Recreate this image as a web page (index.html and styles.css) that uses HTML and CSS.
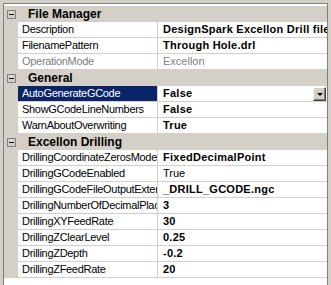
FILE: index.html
```html
<!DOCTYPE html>
<html lang="en">
<head>
    <meta charset="UTF-8">
    <title>Property Grid</title>
    <link rel="stylesheet" href="styles.css">
</head>
<body>

<div class="grid">
    <div class="cat"><span class="toggle"></span><span class="cat-label">File Manager</span></div>
    <div class="row"><div class="gutter"></div><div class="name">Description</div><div class="value bold">DesignSpark Excellon Drill file output</div></div>
    <div class="row"><div class="gutter"></div><div class="name">FilenamePattern</div><div class="value bold">Through Hole.drl</div></div>
    <div class="row readonly"><div class="gutter"></div><div class="name">OperationMode</div><div class="value">Excellon</div></div>

    <div class="cat"><span class="toggle"></span><span class="cat-label">General</span></div>
    <div class="row selected"><div class="gutter"></div><div class="name">AutoGenerateGCode</div><div class="value bold">False<span class="drop"><span class="arrow"></span></span></div></div>
    <div class="row"><div class="gutter"></div><div class="name">ShowGCodeLineNumbers</div><div class="value bold">False</div></div>
    <div class="row"><div class="gutter"></div><div class="name">WarnAboutOverwriting</div><div class="value bold">True</div></div>

    <div class="cat"><span class="toggle"></span><span class="cat-label">Excellon Drilling</span></div>
    <div class="row"><div class="gutter"></div><div class="name">DrillingCoordinateZerosMode</div><div class="value bold">FixedDecimalPoint</div></div>
    <div class="row"><div class="gutter"></div><div class="name">DrillingGCodeEnabled</div><div class="value">True</div></div>
    <div class="row"><div class="gutter"></div><div class="name">DrillingGCodeFileOutputExtension</div><div class="value bold">_DRILL_GCODE.ngc</div></div>
    <div class="row"><div class="gutter"></div><div class="name">DrillingNumberOfDecimalPlaces</div><div class="value bold">3</div></div>
    <div class="row"><div class="gutter"></div><div class="name">DrillingXYFeedRate</div><div class="value bold">30</div></div>
    <div class="row"><div class="gutter"></div><div class="name">DrillingZClearLevel</div><div class="value bold">0.25</div></div>
    <div class="row"><div class="gutter"></div><div class="name">DrillingZDepth</div><div class="value bold">-0.2</div></div>
    <div class="row"><div class="gutter"></div><div class="name">DrillingZFeedRate</div><div class="value bold">20</div></div>
</div>

</body>
</html>
```

FILE: styles.css
```css
body {
    margin: 0;
    padding: 3px 3px 0 3px;
    background-color: #d4d0c8;
    font-family: "Liberation Sans", Arial, sans-serif;
    font-size: 11px;
    color: #000;
}
.grid {
    height: 282px;
    box-sizing: border-box;
    background-color: #fff;
    border-top: 1px solid #808080;
    border-left: 1px solid #808080;
    border-right: 1px solid #808080;
    overflow: hidden;
    padding-top: 2px;
}
.cat {
    display: flex;
    align-items: center;
    height: 16px;
    background-color: #d4d0c8;
    font-weight: bold;
    font-size: 12px;
}
.toggle {
    position: relative;
    width: 7px;
    height: 7px;
    margin-left: 3px;
    border: 1px solid #808080;
}
.toggle::after {
    content: "";
    position: absolute;
    left: 1px;
    top: 3px;
    width: 5px;
    height: 1px;
    background-color: #000;
}
.cat-label {
    margin-left: 12px;
}
.row {
    display: flex;
    height: 16px;
}
.gutter {
    width: 14px;
    flex: none;
    background-color: #d4d0c8;
}
.name, .value {
    box-sizing: border-box;
    height: 16px;
    line-height: 15px;
    padding-left: 4px;
    border-bottom: 1px solid #d4d0c8;
    white-space: nowrap;
    overflow: hidden;
    text-overflow: clip;
    letter-spacing: -0.3px;
}
.name {
    width: 140px;
    flex: none;
    border-right: 1px solid #d4d0c8;
}
.value {
    flex: 1;
    position: relative;
    padding-left: 5px;
    letter-spacing: 0;
}
.bold {
    font-weight: bold;
    letter-spacing: 0.25px;
}
.readonly .name, .readonly .value {
    color: #808080;
}
.selected .name {
    background-color: #0a246a;
    color: #fff;
}
.drop {
    position: absolute;
    right: 1px;
    top: 1px;
    width: 13px;
    height: 14px;
    box-sizing: border-box;
    background-color: #d4d0c8;
    border-top: 1px solid #fff;
    border-left: 1px solid #fff;
    border-right: 1px solid #404040;
    border-bottom: 1px solid #404040;
    box-shadow: inset -1px -1px 0 #808080;
}
.arrow {
    position: absolute;
    left: 3px;
    top: 5px;
    width: 0;
    height: 0;
    border-left: 3px solid transparent;
    border-right: 3px solid transparent;
    border-top: 3px solid #000;
}
```
